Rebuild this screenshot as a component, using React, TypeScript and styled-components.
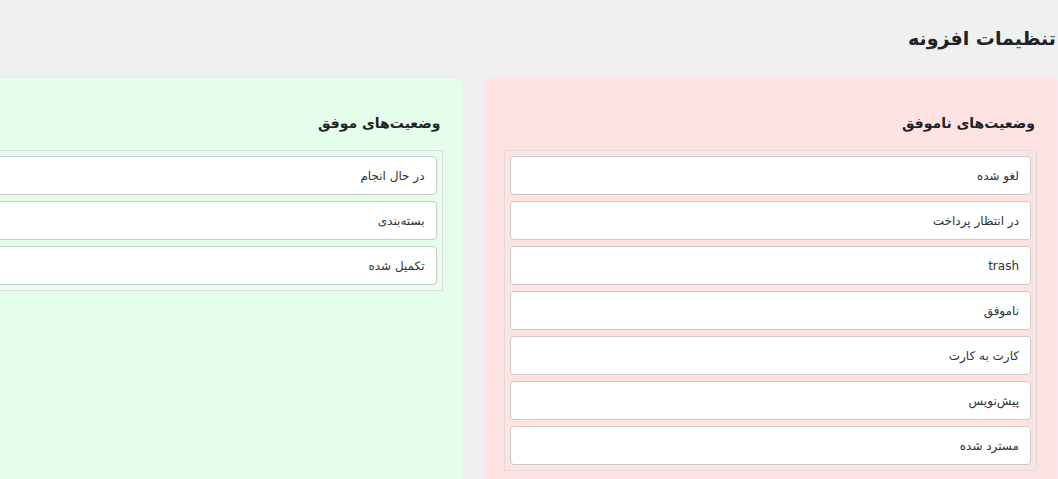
import React from "react";
import styled, { createGlobalStyle } from "styled-components";

const GlobalStyle = createGlobalStyle`
    html, body {
        margin: 0;
        padding: 0;
        background: #f0f0f1;
        overflow: hidden;
    }
    body {
        font-family: "DejaVu Sans", "Noto Sans", sans-serif;
        color: #1d2327;
    }
`

const Page = styled.div`
    direction: rtl;
    width: 1168px;
    margin-left: -111px;
    padding-top: 20px;
`

const Title = styled.h1`
    margin: 0 1px 0 0;
    font-size: 19px;
    font-weight: 700;
    line-height: 36px;
    color: #1d2327;
`

const Columns = styled.div`
    display: grid;
    grid-template-columns: 1fr 1fr;
    gap: 21px;
    margin-top: 22px;
`

const Panel = styled.section<{ $tone: "fail" | "success" }>`
    background: ${p => (p.$tone === "fail" ? "#ffe2e2" : "#e5fdeb")};
    border-radius: 6px;
    padding: 32px 20px 20px;
    min-height: 420px;
    box-shadow: 0 0 3px rgba(0, 0, 0, 0.04);
`

const PanelTitle = styled.h3`
    margin: 0 0 14px;
    padding-right: 2px;
    font-size: 14px;
    font-weight: 700;
    line-height: 26px;
    color: #1d2327;
`

const List = styled.ul`
    list-style: none;
    margin: 0;
    padding: 5px;
    border: 1px solid #dcdcde;
    display: flex;
    flex-direction: column;
    gap: 6px;
`

const Item = styled.li`
    background: #fff;
    border: 1px solid #c9c9cc;
    border-radius: 4px;
    height: 37px;
    padding: 0 11px;
    display: flex;
    align-items: center;
    font-size: 12px;
    color: #2c3338;
`

const failed = ["لغو شده", "در انتظار پرداخت", "trash", "ناموفق", "کارت به کارت", "پیش‌نویس", "مسترد شده"]
const success = ["در حال انجام", "بسته‌بندی", "تکمیل شده"]

export default function App() {
    return (
        <>
            <GlobalStyle />
            <Page>
                <Title>تنظیمات افزونه</Title>
                <Columns>
                    <Panel $tone="fail">
                        <PanelTitle>وضعیت‌های ناموفق</PanelTitle>
                        <List>
                            {failed.map(s => <Item key={s}>{s}</Item>)}
                        </List>
                    </Panel>
                    <Panel $tone="success">
                        <PanelTitle>وضعیت‌های موفق</PanelTitle>
                        <List>
                            {success.map(s => <Item key={s}>{s}</Item>)}
                        </List>
                    </Panel>
                </Columns>
            </Page>
        </>
    )
}
